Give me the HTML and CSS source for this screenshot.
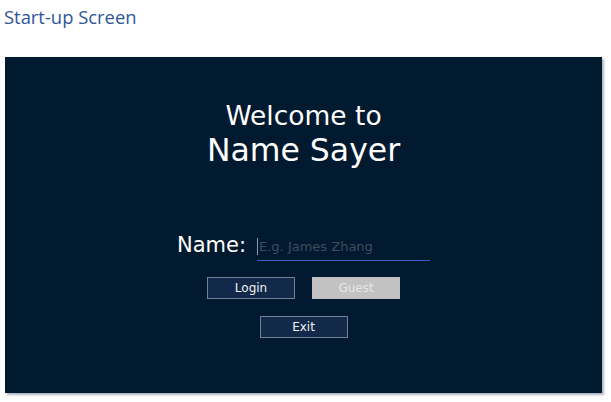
FILE: index.html
```html
<!DOCTYPE html>
<html>
<head>
<meta charset="utf-8">
<link rel="stylesheet" href="styles.css">
</head>
<body>
<h1 class="page-title">Start-up Screen</h1>
<div class="screen">
  <div class="welcome">
    <div class="welcome-line1">Welcome to</div>
    <div class="welcome-line2">Name Sayer</div>
  </div>
  <div class="name-row">
    <label class="name-label">Name:</label>
    <div class="name-input"><span class="caret"></span><span class="placeholder">E.g. James Zhang</span></div>
  </div>
  <div class="btn-row">
    <div class="btn">Login</div>
    <div class="btn btn-guest">Guest</div>
  </div>
  <div class="btn-row exit-row">
    <div class="btn">Exit</div>
  </div>
</div>
</body>
</html>
```
FILE: styles.css
```css
html, body {
  margin: 0;
  padding: 0;
  background: #ffffff;
  width: 611px;
  height: 402px;
  overflow: hidden;
}
.page-title {
  margin: 0;
  padding: 4px 0 0 4px;
  height: 52px;
  box-sizing: border-box;
  font-family: "Open Sans", sans-serif;
  font-weight: normal;
  font-size: 18.4px;
  color: #2f5597;
  line-height: 26px;
}
.screen {
  margin-left: 5px;
  margin-top: 5px;
  width: 597px;
  height: 336px;
  background: #021a30;
  box-shadow: 2px 2px 2px rgba(120, 130, 150, 0.6);
  display: flex;
  flex-direction: column;
  align-items: center;
  font-family: "DejaVu Sans", sans-serif;
  color: #ffffff;
}
.welcome {
  margin-top: 43px;
  text-align: center;
}
.welcome-line1 {
  font-size: 26.5px;
  line-height: 32px;
}
.welcome-line2 {
  font-size: 31.5px;
  line-height: 36px;
}
.name-row {
  margin-top: 64px;
  display: flex;
  align-items: flex-end;
}
.name-label {
  font-size: 21px;
  line-height: 26px;
  margin-right: 11px;
}
.name-input {
  width: 173px;
  height: 24px;
  border-bottom: 1px solid #3a60c6;
  display: flex;
  align-items: flex-start;
  font-size: 13px;
  line-height: 18px;
  margin-bottom: -3px;
}
.caret {
  width: 1px;
  height: 17px;
  margin-top: 2px;
  background: #8899aa;
  margin-right: 1px;
}
.placeholder {
  color: #3f4c5c;
  padding-top: 2px;
}
.btn-row {
  margin-top: 19px;
  display: flex;
  gap: 17px;
}
.btn {
  width: 86px;
  height: 20px;
  border: 1px solid #6f8196;
  background: #13294a;
  font-size: 12px;
  line-height: 20px;
  text-align: center;
  color: #f0f0f0;
}
.btn-guest {
  background: #c2c2c2;
  border-color: #c2c2c2;
  color: #e6e6e6;
}
.exit-row {
  margin-top: 17px;
}
```
